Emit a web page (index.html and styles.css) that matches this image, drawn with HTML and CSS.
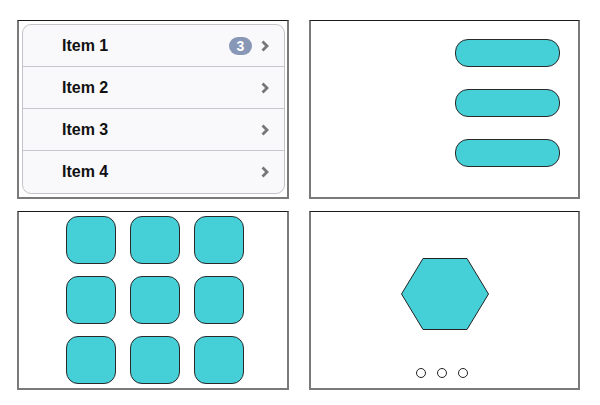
FILE: index.html
```html
<!DOCTYPE html>
<html>
<head>
<meta charset="utf-8">
<link rel="stylesheet" href="styles.css">
</head>
<body>
<div class="grid">
  <section class="panel panel-list">
    <ul class="list">
      <li class="row"><span class="label">Item 1</span><span class="badge">3</span><svg class="chev" width="8" height="12" viewBox="0 0 8 12"><polyline points="1.5,1.5 6,6 1.5,10.5" fill="none" stroke="#767676" stroke-width="2.8"/></svg></li>
      <li class="row"><span class="label">Item 2</span><svg class="chev" width="8" height="12" viewBox="0 0 8 12"><polyline points="1.5,1.5 6,6 1.5,10.5" fill="none" stroke="#767676" stroke-width="2.8"/></svg></li>
      <li class="row"><span class="label">Item 3</span><svg class="chev" width="8" height="12" viewBox="0 0 8 12"><polyline points="1.5,1.5 6,6 1.5,10.5" fill="none" stroke="#767676" stroke-width="2.8"/></svg></li>
      <li class="row"><span class="label">Item 4</span><svg class="chev" width="8" height="12" viewBox="0 0 8 12"><polyline points="1.5,1.5 6,6 1.5,10.5" fill="none" stroke="#767676" stroke-width="2.8"/></svg></li>
    </ul>
  </section>
  <section class="panel panel-pills">
    <div class="pill"></div>
    <div class="pill"></div>
    <div class="pill"></div>
  </section>
  <section class="panel panel-tiles">
    <div class="tiles">
      <div class="tile"></div><div class="tile"></div><div class="tile"></div>
      <div class="tile"></div><div class="tile"></div><div class="tile"></div>
      <div class="tile"></div><div class="tile"></div><div class="tile"></div>
    </div>
  </section>
  <section class="panel panel-hex">
    <svg class="hex" width="88" height="72" viewBox="0 0 88 72"><polygon points="22,0.5 66,0.5 87.5,36 66,71.5 22,71.5 0.5,36" fill="#45d0d8" stroke="#222" stroke-width="1"/></svg>
    <div class="dots"><span class="dot"></span><span class="dot"></span><span class="dot"></span></div>
  </section>
</div>
</body>
</html>
```

FILE: styles.css
```css
* { box-sizing: border-box; }
html, body { margin: 0; background: #fff; }
body {
  padding: 20px 20px 15px 17px;
  font-family: "Liberation Sans", Arial, sans-serif;
}
.grid {
  display: grid;
  grid-template-columns: 272px 271px;
  grid-template-rows: 179px 179px;
  column-gap: 20px;
  row-gap: 12px;
}
.panel {
  border-top: 1px solid #1a1a1a;
  border-left: 2px solid #7a7a7a;
  border-right: 2px solid #7a7a7a;
  border-bottom: 2px solid #7a7a7a;
  background: #fff;
}
.panel-list {
  padding: 3px 2px 3px 3px;
  display: flex;
}
.list {
  list-style: none;
  margin: 0;
  padding: 0;
  flex: 1;
  display: flex;
  flex-direction: column;
  border: 1px solid #c4c3c8;
  border-radius: 9px;
  background: #f9f8fb;
  overflow: hidden;
}
.row {
  height: 42px;
  display: flex;
  align-items: center;
  padding: 0 15px 0 39px;
  border-bottom: 1px solid #c8c7cc;
}
.row:last-child { border-bottom: none; flex: 1; }
.label {
  flex: 1;
  font-weight: bold;
  font-size: 16px;
  color: #111;
}
.badge {
  width: 23px;
  height: 18px;
  border-radius: 9px;
  background: #8797b5;
  color: #fff;
  font-weight: bold;
  font-size: 14px;
  line-height: 18px;
  text-align: center;
  margin-right: 9px;
}
.chev { display: block; }
.panel-pills {
  display: flex;
  flex-direction: column;
  align-items: flex-end;
  gap: 22px;
  padding: 18px 18px 0 0;
}
.pill {
  width: 105px;
  height: 28px;
  border-radius: 13px;
  background: #45d0d8;
  border: 1px solid #2a2a2a;
}
.panel-tiles {
  padding: 4px 0 0 47px;
}
.tiles {
  display: grid;
  grid-template-columns: repeat(3, 50px);
  grid-auto-rows: 48px;
  column-gap: 14px;
  row-gap: 12px;
}
.tile {
  border-radius: 12px;
  background: #45d0d8;
  border: 1px solid #2a2a2a;
}
.panel-hex {
  display: flex;
  flex-direction: column;
  align-items: center;
  padding-top: 46px;
}
.hex { display: block; }
.dots {
  display: flex;
  gap: 11px;
  margin-top: 38px;
  margin-right: 6px;
}
.dot {
  width: 10px;
  height: 10px;
  border-radius: 50%;
  border: 1px solid #222;
  background: #fff;
}
```
